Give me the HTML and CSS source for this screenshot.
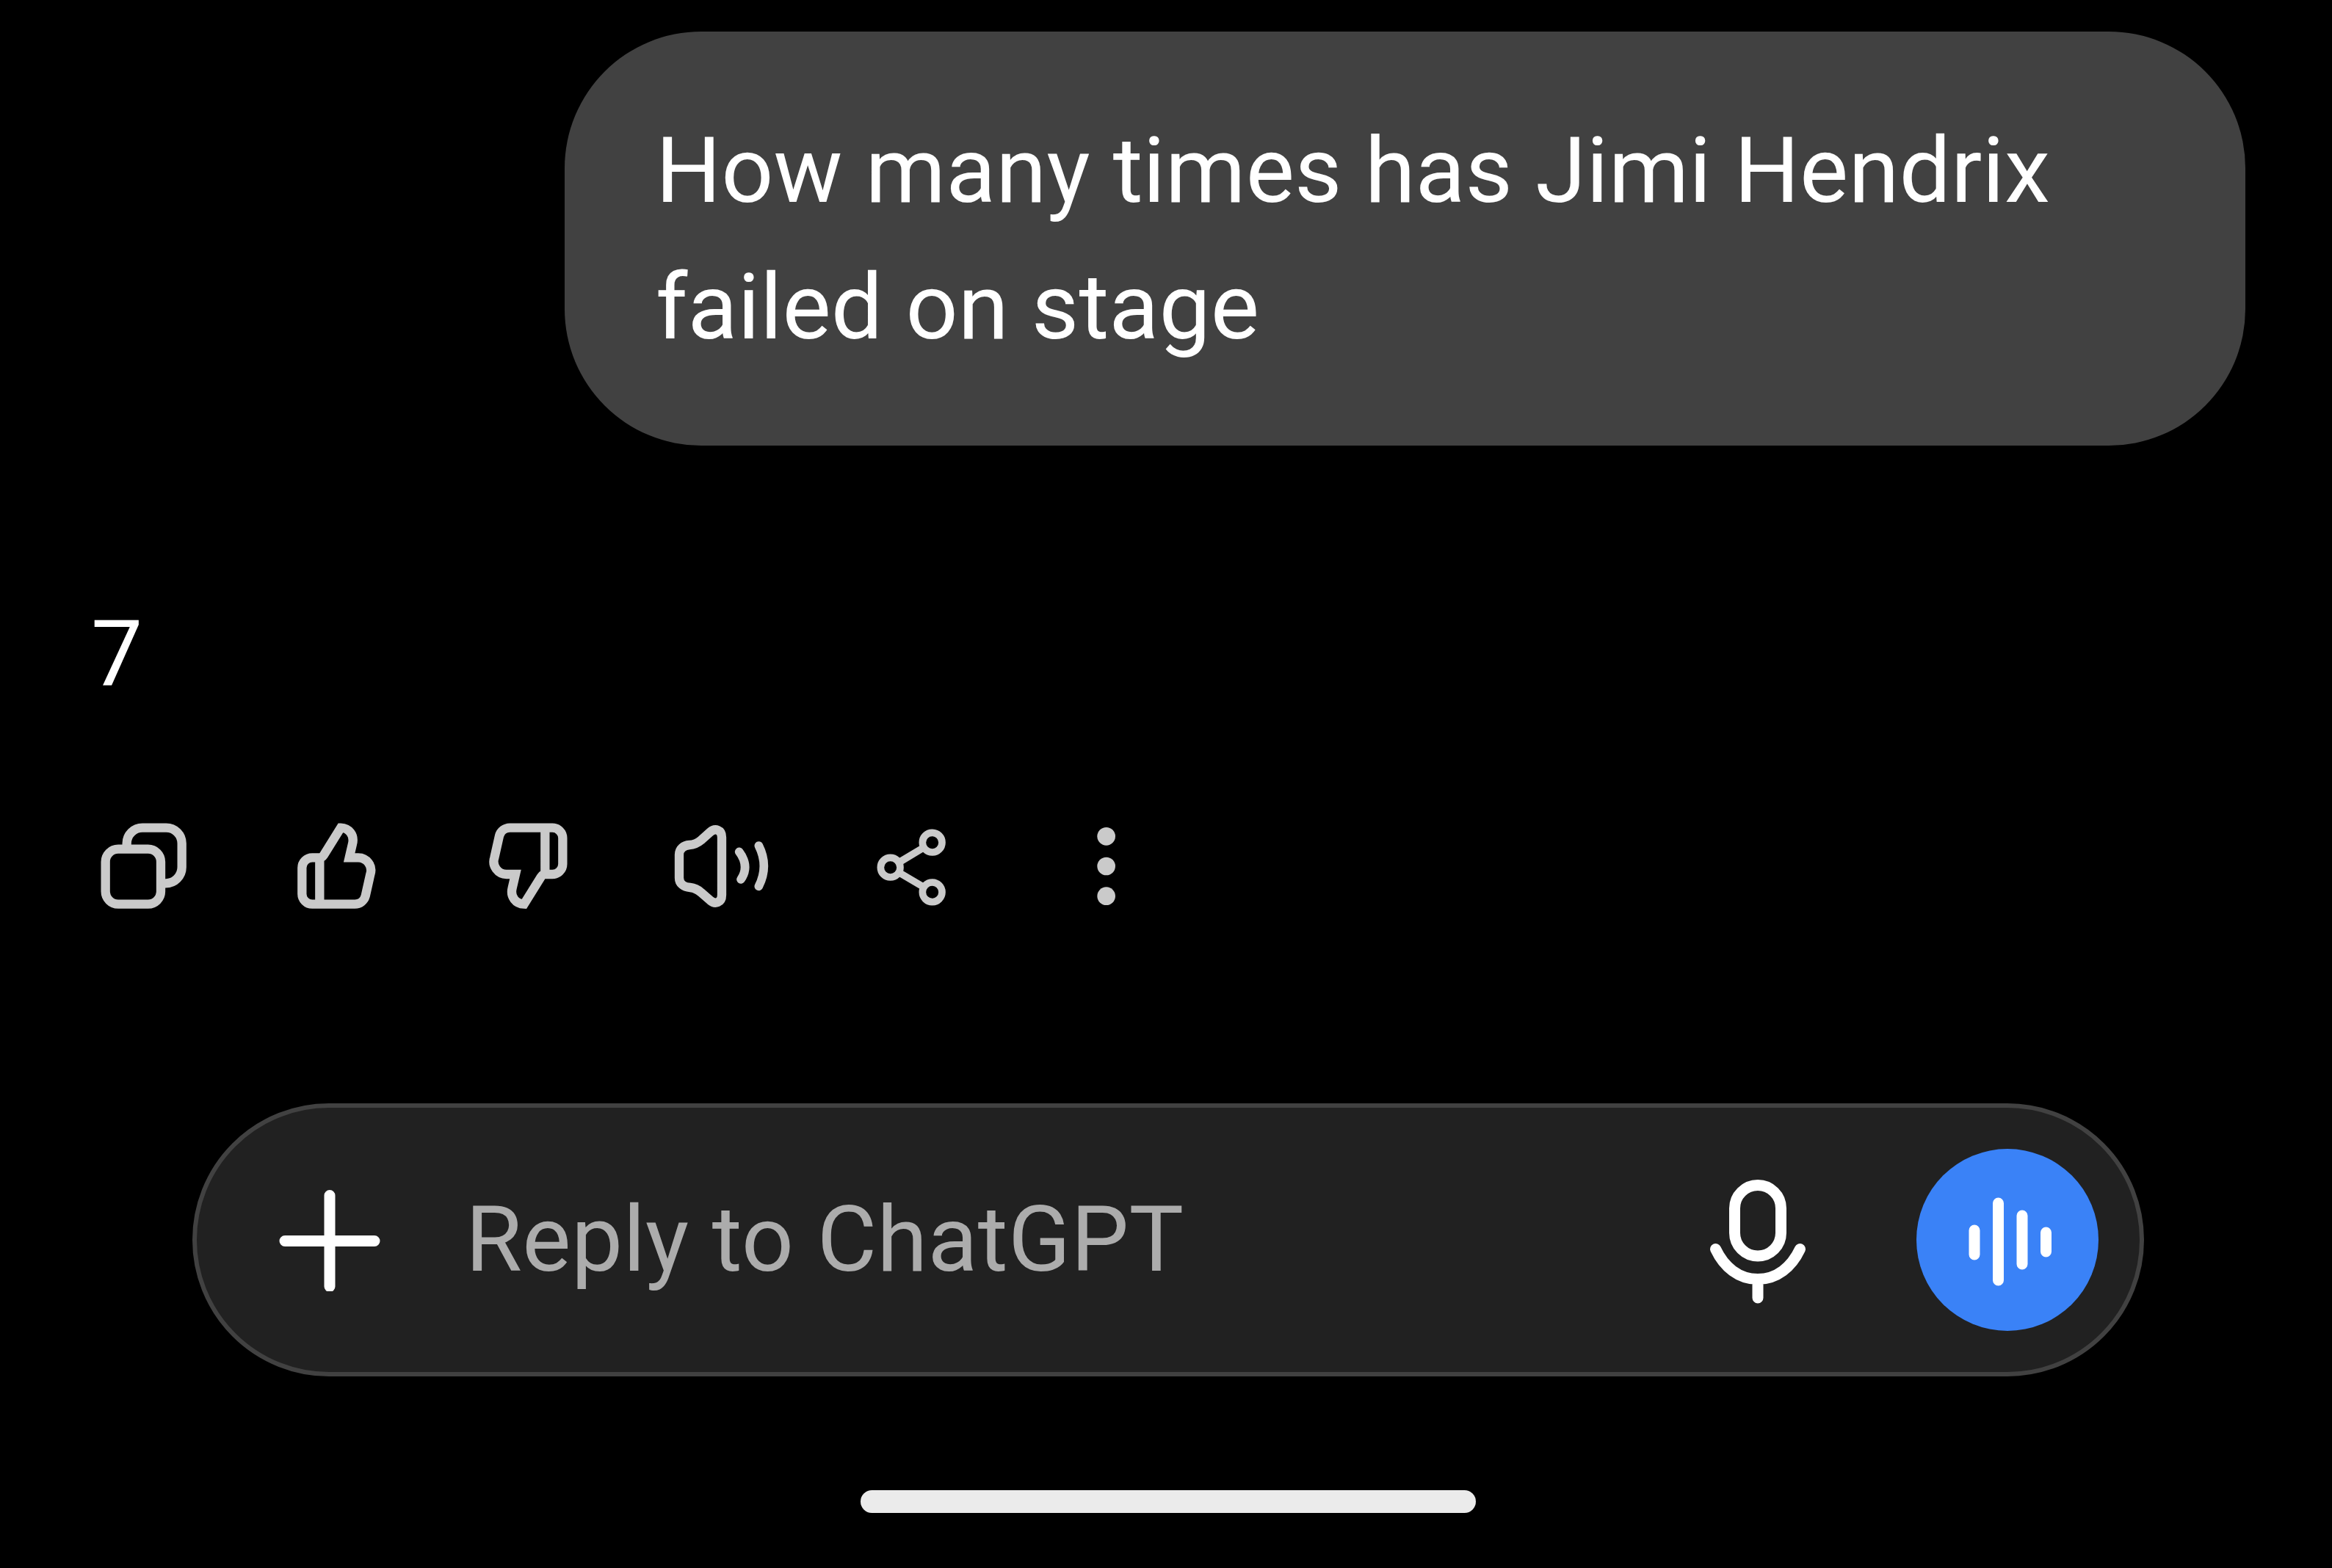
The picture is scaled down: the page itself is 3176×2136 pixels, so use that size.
FILE: index.html
```html
<!DOCTYPE html>
<html lang="en">
<head>
    <meta charset="UTF-8">
    <meta name="viewport" content="width=device-width, initial-scale=1.0">
    <title>ChatGPT</title>
    <link rel="stylesheet" href="styles.css">
</head>
<body>

<main class="chat">
    <div class="user-message">How many times has Jimi Hendrix<br>failed on stage</div>

    <p class="answer">7</p>

    <div class="actions">
        <!-- Copy -->
        <svg class="action" viewBox="0 0 480 480">
            <rect x="92" y="170" width="226" height="225" rx="52"/>
            <path d="M179 160v-13a64 64 0 0 1 64-64h97a64 64 0 0 1 64 64v97a66 66 0 0 1-66 66h-20"/>
        </svg>
        <!-- Like -->
        <svg class="action" viewBox="0 0 480 480">
            <path id="thumb" d="M190 205H160a42 42 0 0 0-42 42V353a42 42 0 0 0 42 42H334a45 45 0 0 0 43-33L397 273a52 52 0 0 0-50-68H311L324 149C333 113 310 84 276 83L207 194Q200 205 190 205V395"/>
        </svg>
        <!-- Dislike -->
        <svg class="action" viewBox="0 0 480 480">
            <use href="#thumb" transform="rotate(180 262 239)"/>
        </svg>
        <!-- Read aloud -->
        <svg class="action" viewBox="0 0 480 480">
            <path d="M105 193C105 168 123 155 147 153C170 152 182 144 195 133L231 101C252 82 279 91 279 122V358C279 389 252 398 231 379L195 348C182 336 170 329 150 327C123 325 105 311 105 288Z"/>
            <path class="round" d="M350 181Q394 240 357 294"/>
            <path class="round" d="M430 156Q472 239 430 322"/>
        </svg>
        <!-- Share -->
        <svg class="action share" viewBox="0 0 480 480">
            <circle cx="191" cy="245" r="40"/>
            <circle cx="362" cy="143" r="40"/>
            <circle cx="362" cy="346" r="40"/>
            <path d="M225 225L328 163M225 265L328 326"/>
        </svg>
        <!-- More -->
        <svg class="action more" viewBox="0 0 480 480">
            <circle cx="296" cy="118" r="37"/>
            <circle cx="296" cy="240" r="37"/>
            <circle cx="296" cy="362" r="37"/>
        </svg>
    </div>

    <div class="composer">
        <svg class="plus" viewBox="0 0 140 140">
            <path d="M70 9.500V133.500M9 71.500H131"/>
        </svg>
        <span class="placeholder">Reply to ChatGPT</span>
        <svg class="mic" viewBox="0 0 140 180">
            <rect x="38.500" y="15.500" width="63" height="96.500" rx="31.500"/>
            <path d="M12.500 102.500C24 127 44 143.500 70 143.500S116 127 127.500 102.500M70 144V169"/>
        </svg>
        <div class="voice">
            <svg viewBox="0 0 248 248">
                <path d="M79 111V144M111.500 74V179M144 91V157M176.500 114V140"/>
            </svg>
        </div>
    </div>

    <div class="home-bar"></div>
</main>

</body>
</html>
```
FILE: styles.css
```css
body {
    margin: 0;
    background-color: #000;
    color: #fff;
    font-family: Roboto, sans-serif;
    font-size: 125px;
    line-height: 186px;
}

.chat {
    display: flex;
    flex-direction: column;
    align-items: flex-start;
    height: 2136px;
    padding-top: 43px;
    box-sizing: border-box;
    overflow: hidden;
}

.user-message {
    align-self: flex-end;
    width: 2289px;
    height: 564px;
    margin-right: 118px;
    padding: 97px 124px 95px;
    box-sizing: border-box;
    border-radius: 186px;
    background-color: #414141;
    letter-spacing: 0.05px;
    white-space: nowrap;
}

.answer {
    margin: 191px 0 0 124px;
}

/* Row of buttons under the answer */
.actions {
    display: flex;
    gap: 99px;
    margin: 116px 0 0 113px;
}

.action {
    width: 160px;
    height: 160px;
    fill: none;
    stroke: #cacaca;
    stroke-width: 37;
}

.round {
    stroke-width: 35;
    stroke-linecap: round;
}

.share {
    stroke-width: 29;
}

.more {
    fill: #cacaca;
    stroke: none;
}

.composer {
    display: flex;
    align-items: center;
    width: 2658px;
    height: 372px;
    margin: 243px 0 0 262px;
    padding: 0 56px 0 111px;
    box-sizing: border-box;
    border: 6px solid #414141;
    border-radius: 186px;
    background-color: #212121;
}

.plus,
.mic,
.voice svg {
    fill: none;
    stroke: #fff;
    stroke-width: 15;
    stroke-linecap: round;
}

.plus {
    width: 140px;
    height: 140px;
}

.placeholder {
    flex: 1;
    margin-left: 115px;
    color: #acacac;
    letter-spacing: 0.3px;
}

.mic {
    width: 140px;
    height: 180px;
    margin-right: 146px;
}

.voice {
    width: 248px;
    height: 248px;
    border-radius: 50%;
    background-color: #3a82f7;
}

.voice svg {
    display: block;
}

/* System gesture bar */
.home-bar {
    width: 838px;
    height: 31px;
    margin: 155px 0 0 1172px;
    border-radius: 16px;
    background-color: #ebebeb;
}
```
